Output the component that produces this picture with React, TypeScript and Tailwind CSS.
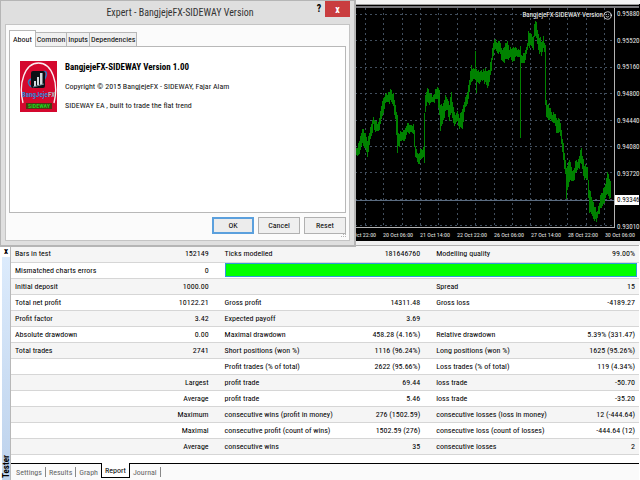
import { Smile } from "lucide-react";

const prices = [
  "0.95880",
  "0.95520",
  "0.95160",
  "0.94800",
  "0.94440",
  "0.94080",
  "0.93720",
  "0.93346",
  "0.93010",
];

const currentPrice = "0.93346";

const times = [
  "17 Oct 22:00",
  "20 Oct 06:00",
  "21 Oct 14:00",
  "22 Oct 22:00",
  "26 Oct 06:00",
  "27 Oct 14:00",
  "28 Oct 22:00",
  "30 Oct 06:00",
];

// x, high, low
const range = [
  [340, 150, 160], [357, 148, 156], [360, 136, 150], [362, 129, 143], [365, 133, 148],
  [367, 141, 157], [369, 133, 145], [372, 120, 133], [373, 117, 124], [375, 121, 132],
  [378, 122, 131], [380, 111, 124], [382, 101, 116], [385, 94, 103], [388, 92, 102],
  [391, 90, 102], [393, 93, 106], [395, 105, 119], [396, 112, 135], [397, 115, 153],
  [398, 133, 146], [402, 132, 140], [405, 128, 139], [407, 123, 132], [410, 125, 132],
  [413, 124, 134], [414, 130, 147], [415, 146, 157], [418, 154, 164], [421, 149, 159],
  [423, 147, 157], [424, 113, 163], [425, 95, 112], [427, 88, 102], [430, 94, 103],
  [433, 95, 102], [437, 87, 99], [439, 90, 115], [440, 105, 131], [443, 103, 120],
  [445, 95, 111], [447, 99, 110], [449, 105, 121], [451, 92, 113], [453, 107, 123],
  [455, 115, 124], [457, 111, 121], [459, 118, 129], [462, 109, 129], [464, 102, 112],
  [467, 92, 104], [469, 80, 92], [471, 65, 82], [473, 68, 79], [474, 69, 79],
  [475, 51, 80], [476, 69, 93], [477, 71, 82], [480, 71, 82], [483, 69, 80],
  [487, 71, 88], [489, 70, 82], [491, 58, 71], [492, 48, 60], [494, 40, 50],
  [497, 43, 53], [499, 41, 52], [501, 48, 60], [503, 48, 62], [507, 41, 59],
  [509, 50, 58], [512, 48, 62], [515, 47, 57], [518, 49, 57], [519, 50, 57],
  [520, 46, 138], [521, 55, 63], [522, 56, 63], [525, 50, 60], [527, 43, 50],
  [528, 31, 46], [530, 33, 45], [533, 36, 50], [534, 24, 37], [536, 22, 38],
  [538, 34, 50], [541, 42, 56], [543, 36, 48], [544, 43, 52], [545, 45, 105],
  [546, 100, 117], [549, 108, 120], [551, 112, 121], [554, 114, 123], [556, 118, 133],
  [559, 119, 132], [561, 130, 144], [563, 143, 160], [565, 160, 174], [566, 168, 199],
  [567, 166, 190], [569, 160, 182], [571, 167, 181], [573, 170, 181], [576, 160, 172],
  [578, 159, 168], [581, 148, 164], [584, 166, 180], [587, 167, 180], [588, 180, 198],
  [589, 190, 213], [592, 200, 216], [596, 212, 222], [598, 206, 214], [601, 193, 208],
  [605, 184, 198], [607, 172, 194], [610, 181, 198], [611, 193, 203],
];

function barsPath() {
  let d = "";
  for (let i = 0; i < range.length - 1; i++) {
    const [x0, h0, l0] = range[i];
    const [x1, h1, l1] = range[i + 1];
    for (let x = x0; x < x1; x++) {
      const t = (x - x0) / (x1 - x0);
      const up = x === x0 ? 0 : ((x * 7) % 5) - 2;
      const down = x === x0 ? 0 : ((x * 11) % 5) - 2;
      const high = Math.round(h0 + (h1 - h0) * t + up);
      const low = Math.round(l0 + (l1 - l0) * t + down);
      d += `M${x + 0.5} ${high}V${low}`;
    }
  }
  return d;
}

const verticals = [...Array(20)].map((_, i) => Math.round(604 - i * 18.4) + 0.5);
const horizontals = [...Array(9)].map((_, i) => Math.round(14 + i * 26.4) + 0.5);

const report = [
  ["Bars in test", "152149", "Ticks modelled", "181646760", "Modelling quality", "99.00%"],
  ["Mismatched charts errors", "0"],
  ["Initial deposit", "1000.00", "", "", "Spread", "15"],
  ["Total net profit", "10122.21", "Gross profit", "14311.48", "Gross loss", "-4189.27"],
  ["Profit factor", "3.42", "Expected payoff", "3.69", "", ""],
  ["Absolute drawdown", "0.00", "Maximal drawdown", "458.28 (4.16%)", "Relative drawdown", "5.39% (331.47)"],
  ["Total trades", "2741", "Short positions (won %)", "1116 (96.24%)", "Long positions (won %)", "1625 (95.26%)"],
  ["", "", "Profit trades (% of total)", "2622 (95.66%)", "Loss trades (% of total)", "119 (4.34%)"],
  ["", "Largest", "profit trade", "69.44", "loss trade", "-50.70"],
  ["", "Average", "profit trade", "5.46", "loss trade", "-35.20"],
  ["", "Maximum", "consecutive wins (profit in money)", "276 (1502.59)", "consecutive losses (loss in money)", "12 (-444.64)"],
  ["", "Maximal", "consecutive profit (count of wins)", "1502.59 (276)", "consecutive loss (count of losses)", "-444.64 (12)"],
  ["", "Average", "consecutive wins", "35", "consecutive losses", "2"],
];

const testerTabs = ["Settings", "Results", "Graph", "Report", "Journal"];
const dialogTabs = ["About", "Common", "Inputs", "Dependencies"];

function PriceChart() {
  return (
    <section className="border-t-4 border-[#f4f4f4] bg-black pr-px">
      <div className="h-px bg-[#a0a0a0]" />
      <div className="mt-px flex border-t-2 border-[#77777b]">
        <div className="relative min-w-0 flex-1 border-r border-b border-[#b4b4b4]">
          <svg
            viewBox="0 8 614 219"
            preserveAspectRatio="xMaxYMin meet"
            className="block h-[219px] w-full"
            fill="none"
            shapeRendering="crispEdges"
          >
            <g stroke="#414e5d" strokeDasharray="2 3">
              {verticals.map((x) => (
                <path key={x} d={`M${x} 8V227`} />
              ))}
              {horizontals.map((y) => (
                <path key={y} d={`M0 ${y}H614`} />
              ))}
            </g>
            <path d="M0 200.5H614" stroke="#5a6b80" />
            <path d={barsPath()} stroke="#008200" />
          </svg>
          <div className="absolute top-0.5 right-0.5 flex items-center text-[7px] leading-[10px] text-white">
            BangjejeFX-SIDEWAY Version
            <Smile size={9} strokeWidth={2} />
          </div>
        </div>
        <div className="-mb-1 flex w-6 flex-col justify-between pt-px text-[7px] leading-[10px] text-[#e4e4e4]">
          {prices.map((price) => (
            <span
              key={price}
              className={price === currentPrice ? "bg-white pl-0.5 text-black" : "pl-0.5"}
            >
              {price}
            </span>
          ))}
        </div>
      </div>
      <div className="flex justify-end pr-1">
        <div className="flex w-[289px] justify-between pt-0.5 pb-px text-[6px] leading-[10px] whitespace-nowrap text-[#e4e4e4]">
          {times.map((time) => (
            <span key={time}>{time}</span>
          ))}
        </div>
      </div>
    </section>
  );
}

function ReportTable() {
  return (
    <table className="w-full table-fixed text-[8px] leading-[15px] whitespace-nowrap">
      <colgroup>
        <col className="w-1/5" />
        <col className="w-[84px]" />
        <col className="w-1/5" />
        <col className="w-[86px]" />
        <col />
        <col className="w-[70px]" />
      </colgroup>
      <tbody>
        {report.map((row, i) => (
          <tr key={i} className="h-4 border-b border-[#d6d6d6] odd:bg-[#f5f5f5]">
            <td className="p-0 pl-1">{row[0]}</td>
            <td className="p-0 pr-3 text-right">{row[1]}</td>
            {row.length === 2 ? (
              <td colSpan={4} className="p-0 pr-0.5 pl-1">
                <div className="h-3.5 border border-[#2f9bd8] bg-[#00ff00]" />
              </td>
            ) : (
              <>
                <td className="p-0 pl-1">{row[2]}</td>
                <td className="p-0 pr-3 text-right">{row[3]}</td>
                <td className="p-0 pl-1">{row[4]}</td>
                <td className="p-0 pr-1 text-right">{row[5]}</td>
              </>
            )}
          </tr>
        ))}
      </tbody>
    </table>
  );
}

function Tester() {
  return (
    <section className="flex flex-1 bg-white pr-px">
      <div className="flex w-[11px] flex-col border-r border-[#b8b8b8] bg-white pl-0.5">
        <button aria-label="Close tester" className="h-3 text-[9px] leading-[9px] font-bold">
          x
        </button>
        <div className="flex flex-1 items-end bg-linear-to-b from-[#dcebfc] to-[#bdd2ec] pb-0.5">
          <span className="rotate-180 text-[9px] leading-[8px] font-bold [writing-mode:vertical-rl]">
            Tester
          </span>
        </div>
      </div>
      <div className="flex min-w-0 flex-1 flex-col">
        <div className="flex-1 border-t border-[#b0b0b0]">
          <ReportTable />
        </div>
        <div className="flex h-[17px] border-t border-black bg-[#fafafa] pl-0.5 text-[8px] leading-[15px]">
          {testerTabs.map((tab) =>
            tab === "Report" ? (
              <button
                key={tab}
                className="-mt-px h-[15px] border-x border-b border-black bg-white px-[3px] text-black"
              >
                {tab}
              </button>
            ) : (
              <button key={tab} className="flex items-center pl-[3px] text-[#666]">
                {tab}
                <span
                  className={tab === "Graph" ? "ml-[3px] h-2.5" : "ml-[3px] h-2.5 border-r border-[#888]"}
                />
              </button>
            ),
          )}
        </div>
      </div>
    </section>
  );
}

function Logo() {
  return (
    <svg viewBox="0 0 37 51" className="h-[51px] w-[37px] shrink-0">
      <rect width="37" height="51" fill="#d4082e" />
      <path d="M3 42C-2 22 5 2 18.500 2S39 22 34 42" fill="none" stroke="#fbeef0" strokeWidth="1.400" />
      <path d="M11 18C7 20 8 24 12 26M22 11C27 9 28 13 24 19" fill="none" stroke="#2a7fc4" strokeWidth="1.500" />
      <rect x="11" y="10" width="14" height="17" rx="2" fill="#0b1116" />
      <path d="M14 25V20h2v5zM17 24V16h2v8zM20 24V12h2.500v12z" fill="#d3dadd" />
      <path d="M13 26l11-3" stroke="#78909c" strokeWidth="1" />
      <text x="18.500" y="36" textAnchor="middle" fontSize="7" fontWeight="bold" fontFamily="Roboto Condensed, sans-serif" fill="#2c86d8">
        BangJeje<tspan fill="#a9b4b8">FX</tspan>
      </text>
      <rect x="6" y="42" width="26" height="6" fill="#4a3a12" />
      <text x="19" y="47" textAnchor="middle" fontSize="6" fontWeight="bold" fontFamily="Roboto Condensed, sans-serif" fill="#19d51c">
        SIDEWAY
      </text>
    </svg>
  );
}

function ExpertDialog() {
  return (
    <div
      role="dialog"
      aria-labelledby="expert-title"
      className="absolute top-0 left-0 w-[356px] border-t border-r-2 border-b-2 border-l border-[#b5b5b5] bg-[#dfdfdf] px-1 pb-1"
    >
      <div className="flex h-[23px] items-start">
        <h1 id="expert-title" className="flex-1 pl-[42px] text-center text-[10px] leading-[24px] text-[#333]">
          Expert - BangjejeFX-SIDEWAY Version
        </h1>
        <button aria-label="Help" className="w-3 text-[10px] leading-[16px] font-bold">
          ?
        </button>
        <button
          aria-label="Close"
          className="h-4 w-[25px] bg-[#c93d3f] text-[10px] leading-[15px] font-bold text-white"
        >
          x
        </button>
      </div>
      <div className="relative border border-[#c4c4c4] bg-[#fbfbfb] px-[3px] pt-[5px] pb-1.5">
        <div className="flex items-end text-[8px] leading-[13px]">
          {dialogTabs.map((tab) => (
            <button
              key={tab}
              className={
                tab === "About"
                  ? "relative -mb-px h-[17px] border border-b-0 border-[#b8b8b8] bg-white px-[3px]"
                  : "h-[14px] border border-b-0 border-l-0 border-[#b8b8b8] bg-[#f0f0f0] px-px"
              }
            >
              {tab}
            </button>
          ))}
        </div>
        <div className="flex h-[167px] gap-2 border border-[#b8b8b8] bg-white px-2.5 pt-3.5">
          <Logo />
          <div className="text-[8px] leading-[13px] text-[#111]">
            <h2 className="text-[9px] font-bold text-black">BangjejeFX-SIDEWAY Version 1.00</h2>
            <p className="mt-1.5">Copyright © 2015 BangjejeFX - SIDEWAY, Fajar Alam</p>
            <p className="mt-1.5">SIDEWAY EA , built to trade the flat trend</p>
          </div>
        </div>
        <div className="mt-1 flex justify-end gap-1 text-[8px] leading-[15px]">
          <button className="h-[17px] w-[42px] border-2 border-[#5ba0dd] bg-[#ececec] leading-[13px]">
            OK
          </button>
          <button className="h-[17px] w-[42px] border border-[#b0b0b0] bg-[#efefef]">Cancel</button>
          <button className="h-[17px] w-[42px] border border-[#b0b0b0] bg-[#efefef]">Reset</button>
        </div>
        <svg viewBox="0 0 6 6" className="absolute right-0.5 bottom-0.5 size-1.5" fill="#b4b4b4">
          <path d="M4 0h1v1h-1zM2 2h1v1h-1zM4 2h1v1h-1zM0 4h1v1h-1zM2 4h1v1h-1zM4 4h1v1h-1z" />
        </svg>
      </div>
    </div>
  );
}

export default function App() {
  return (
    <main className="relative flex min-h-screen flex-col bg-white font-['Roboto_Condensed','Liberation_Sans',sans-serif] text-black">
      <PriceChart />
      <div className="h-1 bg-[#f0f0f0]" />
      <Tester />
      <ExpertDialog />
    </main>
  );
}
